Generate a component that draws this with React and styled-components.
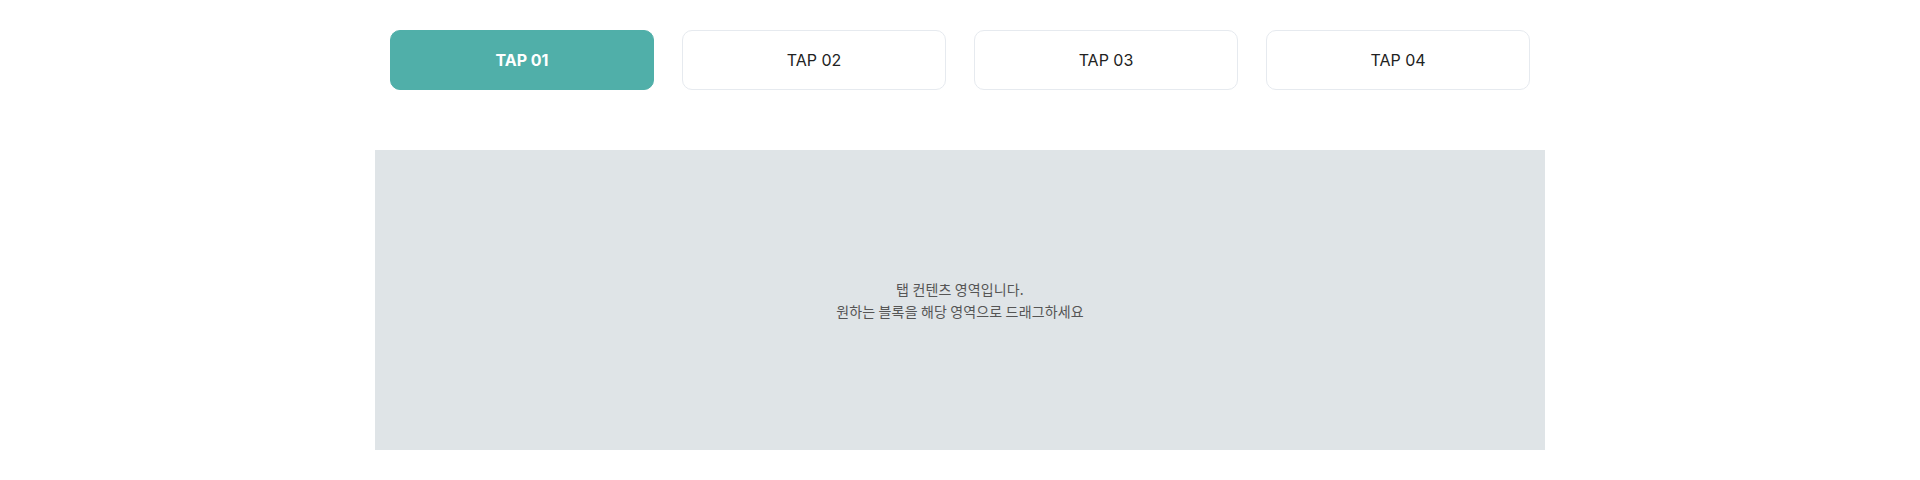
import styled, { createGlobalStyle } from "styled-components";
import { useState } from "react";

const GlobalStyle = createGlobalStyle`
  body {
    margin: 0;
    background: #ffffff;
    font-family: Inter, "Noto Sans", "Noto Sans CJK KR", sans-serif;
  }
`;

const Section = styled.section`
  width: 1170px;
  margin: 0 auto;
  padding-top: 30px;
`;

const TabList = styled.ul`
  display: flex;
  gap: 28px;
  margin: 0;
  padding: 0 15px;
  list-style: none;
`;

const Tab = styled.li`
  flex: 1;
  height: 60px;
  box-sizing: border-box;
  display: flex;
  align-items: center;
  justify-content: center;
  border-radius: 10px;
  border: 1px solid ${(props) => (props.active ? "#50afa9" : "#e6eaef")};
  background-color: ${(props) => (props.active ? "#50afa9" : "#ffffff")};
  color: ${(props) => (props.active ? "#ffffff" : "#222222")};
  font-size: 16px;
  font-weight: ${(props) => (props.active ? 700 : 400)};
  cursor: pointer;
`;

const Panel = styled.div`
  margin-top: 60px;
  height: 300px;
  background-color: #dfe4e7;
  display: flex;
  flex-direction: column;
  align-items: center;
  justify-content: center;
`;

const Text = styled.p`
  margin: 0;
  font-family: "Noto Sans CJK KR", "Noto Sans", sans-serif;
  font-size: 14px;
  line-height: 22px;
  letter-spacing: 0.01em;
  color: #555555;
  text-align: center;
`;

const tabs = ["TAP 01", "TAP 02", "TAP 03", "TAP 04"];

const App = () => {
  const [current, setCurrent] = useState(0);

  return (
    <>
      <GlobalStyle />
      <Section>
        <TabList>
          {tabs.map((label, i) => (
            <Tab key={label} active={i === current} onClick={() => setCurrent(i)}>
              {label}
            </Tab>
          ))}
        </TabList>
        <Panel>
          <Text>탭 컨텐츠 영역입니다.</Text>
          <Text>원하는 블록을 해당 영역으로 드래그하세요</Text>
        </Panel>
      </Section>
    </>
  );
};

export default App;
